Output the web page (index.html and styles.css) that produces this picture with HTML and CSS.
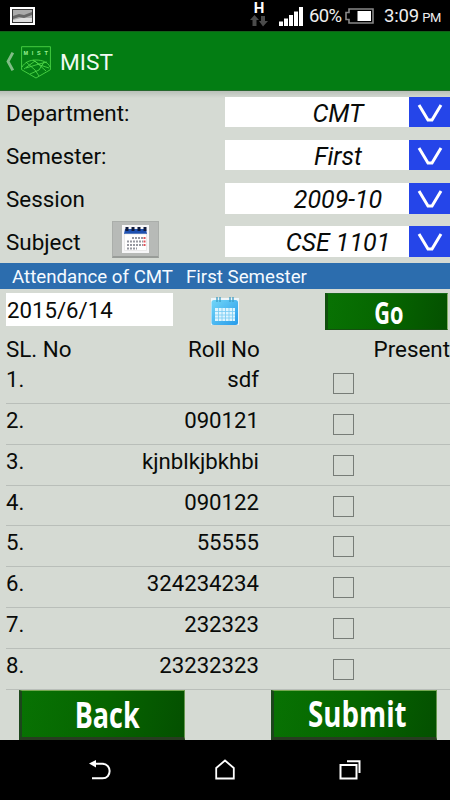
FILE: index.html
```html
<!DOCTYPE html>
<html lang="en">
<head>
<meta charset="utf-8">
<title>MIST</title>
<link rel="stylesheet" href="styles.css">
</head>
<body>
<div class="screen">
  <header class="status">
    <svg class="picture" width="25" height="18" viewBox="0 0 25 18"><path fill="#fff" d="M0 0h25v18H0z"/><path fill="#333" d="M2 2h21v14H2z"/><path fill="#aaa" d="M3 3h19v12H3z"/><path fill="#666" d="M3 9l6-2 5 1 8-3v3l-8 3-5-1-6 2z"/><path fill="#ddd" d="M3 13l8-2 11 0v4H3z"/></svg>
    <div class="network"><b>H</b><svg width="18" height="12" viewBox="0 0 18 12"><path fill="#4b4b4b" d="M4.500 0L9 5H6.500v6h-4V5H0zM11 1h4v5h3l-5 5.500L9 6h2z"/></svg></div>
    <svg class="signal" width="24" height="19" viewBox="0 0 24 19"><path fill="#fff" d="M0 14.500h4V19H0zM5 11.500h4V19H5zM10 8h4v11h-4zM15 4.500h4V19h-4zM20 0h4v19h-4z"/></svg>
    <span class="percent">60%</span>
    <svg class="battery" width="29" height="16" viewBox="0 0 29 16"><path fill="none" stroke="#888" stroke-width="1.600" d="M4 1h24v14H4v-3.500H1v-7h3z"/><path fill="#fff" d="M12.500 3H26v10H12.500z"/></svg>
    <span class="clock">3:09 <small>PM</small></span>
  </header>

  <div class="appbar">
    <svg class="up" width="9" height="19" viewBox="0 0 9 19"><path fill="none" stroke="#80bd86" stroke-width="2.800" d="M7.800.7L3 9.500l4.800 8.800"/></svg>
    <svg class="logo" width="30" height="33" viewBox="0 0 30 33"><g fill="none" stroke="#55df4d" stroke-width=".8"><path d="M.6.700h28.800v23L15 32 .6 23.700z"/><path d="M1 21c3-5 8-7 14-7s12 2 14 7M5 16l9 8 4 6M3 23l11-8 11 10M12 14l7 5 9 3M5 22l13-4 8-2M9 28l9-4 5-8"/></g><text x="2.500" y="8.500">M I S T</text></svg>
    <h1>MIST</h1>
  </div>

  <main>
    <div class="fields">
      <div class="field"><label>Department:</label><div class="select"><span>CMT</span><i><svg width="26" height="19" viewBox="0 0 26 19"><path d="M2 1L11 16h4L24 1"/></svg></i></div></div>
      <div class="field"><label>Semester:</label><div class="select"><span>First</span><i><svg width="26" height="19" viewBox="0 0 26 19"><path d="M2 1L11 16h4L24 1"/></svg></i></div></div>
      <div class="field"><label>Session</label><div class="select"><span>2009-10</span><i><svg width="26" height="19" viewBox="0 0 26 19"><path d="M2 1L11 16h4L24 1"/></svg></i></div></div>
      <div class="field"><label>Subject</label>
        <button class="subject-cal"><svg width="27" height="28" viewBox="0 0 27 28"><path fill="#f7f7f8" d="M0 0h27v28H0z"/><path fill="#1d50b0" d="M3 4h21l1 5H2z"/><path stroke="#101b3c" stroke-width="4" stroke-dasharray="3 3" d="M3.500 4h21"/><path fill="#fff" stroke="#dedede" stroke-width=".6" d="M2.500 9h22v16.500h-22z"/><g stroke="#9698a0" stroke-width="2" stroke-dasharray="2 1"><path d="M10 13h11M5 16.500h16M5 20h16M5 23.500h10"/></g><path stroke="#df5159" stroke-width="2" stroke-dasharray="2 1.500" d="M22.500 12v9"/></svg></button>
        <div class="select"><span>CSE 1101</span><i><svg width="26" height="19" viewBox="0 0 26 19"><path d="M2 1L11 16h4L24 1"/></svg></i></div></div>
    </div>

    <div class="caption"><span>Attendance of CMT</span><span>First Semester</span></div>

    <div class="daterow">
      <div class="date">2015/6/14</div>
      <svg class="datecal" width="28" height="29" viewBox="0 0 28 29"><defs><linearGradient id="sky" x2="1" y2="1"><stop stop-color="#72d6f8"/><stop offset="1" stop-color="#279bea"/></linearGradient></defs><path fill="#eef6fa" d="M0 1h28v27H0z"/><rect x=".5" y="3" width="26.500" height="25" rx="2.500" fill="url(#sky)"/><path stroke="#3a9cc5" stroke-width="1.300" d="M6 0v5M9 0v5M19 0v5M22 0v5"/><rect x="4" y="11" width="20" height="13" fill="#def5ff"/><path stroke="#77caf2" stroke-width=".8" d="M4 14.500h20M4 18h20M4 21h20M7.500 11v13M11 11v13M14.500 11v13M18 11v13M21.500 11v13"/></svg>
      <button class="green go"><span>Go</span></button>
    </div>

    <div class="heads"><span>SL. No</span><span>Roll No</span><span>Present</span></div>
    <div class="rows">
      <div class="row"><span>1.</span><span>sdf</span><i></i></div>
      <div class="row"><span>2.</span><span>090121</span><i></i></div>
      <div class="row"><span>3.</span><span>kjnblkjbkhbi</span><i></i></div>
      <div class="row"><span>4.</span><span>090122</span><i></i></div>
      <div class="row"><span>5.</span><span>55555</span><i></i></div>
      <div class="row"><span>6.</span><span>324234234</span><i></i></div>
      <div class="row"><span>7.</span><span>232323</span><i></i></div>
      <div class="row"><span>8.</span><span>23232323</span><i></i></div>
    </div>

    <div class="actions"><button class="green back"><span>Back</span></button><button class="green submit"><span>Submit</span></button></div>
  </main>

  <nav>
    <svg width="23" height="21" viewBox="0 0 23 21"><path fill="none" stroke="#fff" stroke-width="2" d="M3 18.300h10.500c9.500 0 9.500-14.500 0-14.500H4"/><path fill="#fff" d="M0 3.500L7 0v7.500z"/></svg>
    <svg width="20" height="21" viewBox="0 0 20 21"><path fill="none" stroke="#fff" stroke-width="1.800" d="M1.200 9L10 1.500 18.800 9v10.500H1.200z"/></svg>
    <svg width="22" height="20" viewBox="0 0 22 20"><path fill="none" stroke="#fff" stroke-width="2" d="M1.500 5h16v13.500h-16zM8 1.200h12.500V13"/></svg>
  </nav>
</div>
</body>
</html>
```

FILE: styles.css
```css
* { box-sizing: border-box; }
body { margin: 0; background: #000; font-family: Roboto, "Liberation Sans", sans-serif; }
.screen { width: 450px; height: 800px; overflow: hidden; display: flex; flex-direction: column; color: #090b09; }
svg { display: block; flex: none; }
button { border: 0; padding: 0; font: inherit; }

.status { height: 31px; flex: none; display: flex; align-items: flex-start; background: #000; color: #eee; }
.picture { margin: 7px 0 0 10px; }
.network { width: 18px; height: 29px; margin: 1px 0 0 215px; text-align: center; }
.network b { display: block; font-size: 15px; line-height: 14px; color: #fff; }
.signal { margin: 7px 0 0 11px; }
.percent { width: 33px; margin: 6px 0 0 6px; font-size: 18.500px; line-height: 21px; letter-spacing: -.7px; }
.battery { margin: 8px 0 0 3px; }
.clock { margin: 6px 0 0 10px; font-size: 18.500px; line-height: 21px; letter-spacing: -.2px; white-space: nowrap; }
.clock small { font-size: 13px; letter-spacing: -.5px; margin-left: -1px; }

.appbar { height: 60px; flex: none; display: flex; align-items: flex-start; background: #037d13; border-top: 1px solid #126019; border-bottom: 1px solid #26682e; }
.up { margin: 20px 0 0 5px; }
.logo { margin: 14px 0 0 7px; }
.logo text { fill: #9bf293; font: bold 5.500px "Liberation Sans", sans-serif; letter-spacing: 1.1px; }
h1 { margin: 17px 0 0 9px; font-size: 22.700px; line-height: 27px; font-weight: 400; color: #f2faf2; }

main { height: 649px; flex: none; background: linear-gradient(#b9c0b9, #d5dad3 7px); }
.fields { height: 172px; padding-top: 6px; display: flex; flex-direction: column; gap: 12.700px; }
.field { height: 30.400px; flex: none; display: flex; align-items: center; padding-left: 6px; }
label { width: 105px; font-size: 22.400px; line-height: 30px; white-space: nowrap; padding-top: 1px; }
.select { width: 225px; height: 100%; margin-left: auto; display: flex; background: #fff; font-size: 25px; font-style: italic; }
.select span { width: 184px; padding: 2px 0 0 42px; line-height: 30px; text-align: center; white-space: nowrap; }
.select i { flex: 1; background: #2545e9; padding: 7px 0 0 8px; }
.select path { fill: none; stroke: #fff; stroke-width: 3; }
.subject-cal { width: 47px; height: 37px; margin: -8px 0 -5px 1px; padding-bottom: 1px; display: flex; align-items: center; justify-content: center; background: #b7bab7; border: 1px solid #aaaeaa; border-bottom: 2px solid #989c98; }

.caption { height: 26px; display: flex; gap: 13px; padding-left: 12px; background: #2c6dae; color: #f5faff; font-size: 18.700px; line-height: 28px; white-space: nowrap; }
.daterow { height: 41px; padding: 4px 0 0 6px; display: flex; align-items: flex-start; }
.date { width: 167px; height: 33px; background: #fff; font-size: 22.200px; line-height: 35px; padding-left: 1px; }
.datecal { margin: 4px 0 0 38px; }
.green { color: #fff; font-family: "Open Sans", sans-serif; font-weight: 700; background: linear-gradient(100deg, #087203, #066500 50%, #045000); display: flex; justify-content: center; align-items: center; }
.green span { display: block; line-height: 1; }
.go { width: 123px; height: 37px; margin-left: 86px; border: solid; border-width: 1px 1px 1px 3px; border-color: #17691a #87b16a #14500f #104f0d; font-size: 31px; }
.go span { transform: translate(1px, 1px) scaleX(.7); }

.heads { height: 33px; display: flex; padding: 4px 0 0 6px; font-size: 22.400px; line-height: 30px; white-space: nowrap; }
.heads span:first-child { width: 182px; }
.heads span:last-child { margin-left: auto; }
.rows { padding-left: 6px; }
.row { height: 40.860px; display: flex; align-items: flex-start; border-bottom: 1px solid #b9beb9; font-size: 22.200px; line-height: 30px; }
.row span:first-child { width: 53px; padding-top: 1px; }
.row span:nth-child(2) { width: 200px; padding-top: 1px; text-align: right; }
.row i { width: 21px; height: 21px; margin: 10px 0 0 74px; border: 1px solid #777c77; }

.actions { display: flex; padding-left: 19px; }
.back, .submit { width: 166px; height: 50px; border: solid; border-width: 1px 1px 3px 3px; border-color: #75a852 #64964e #273c20 #1c461c; font-size: 35px; }
.submit { margin-left: 86px; }
.back span { transform: translate(4px, 1px) scaleX(.77); }
.submit span { transform: translate(2px, 0) scaleX(.79); }

nav { height: 60px; flex: none; display: flex; align-items: flex-start; background: #000; padding: 20px 0 0 89px; }
nav svg:nth-child(2) { margin: -1px 0 0 103px; }
nav svg:nth-child(3) { margin-left: 104px; }
```
